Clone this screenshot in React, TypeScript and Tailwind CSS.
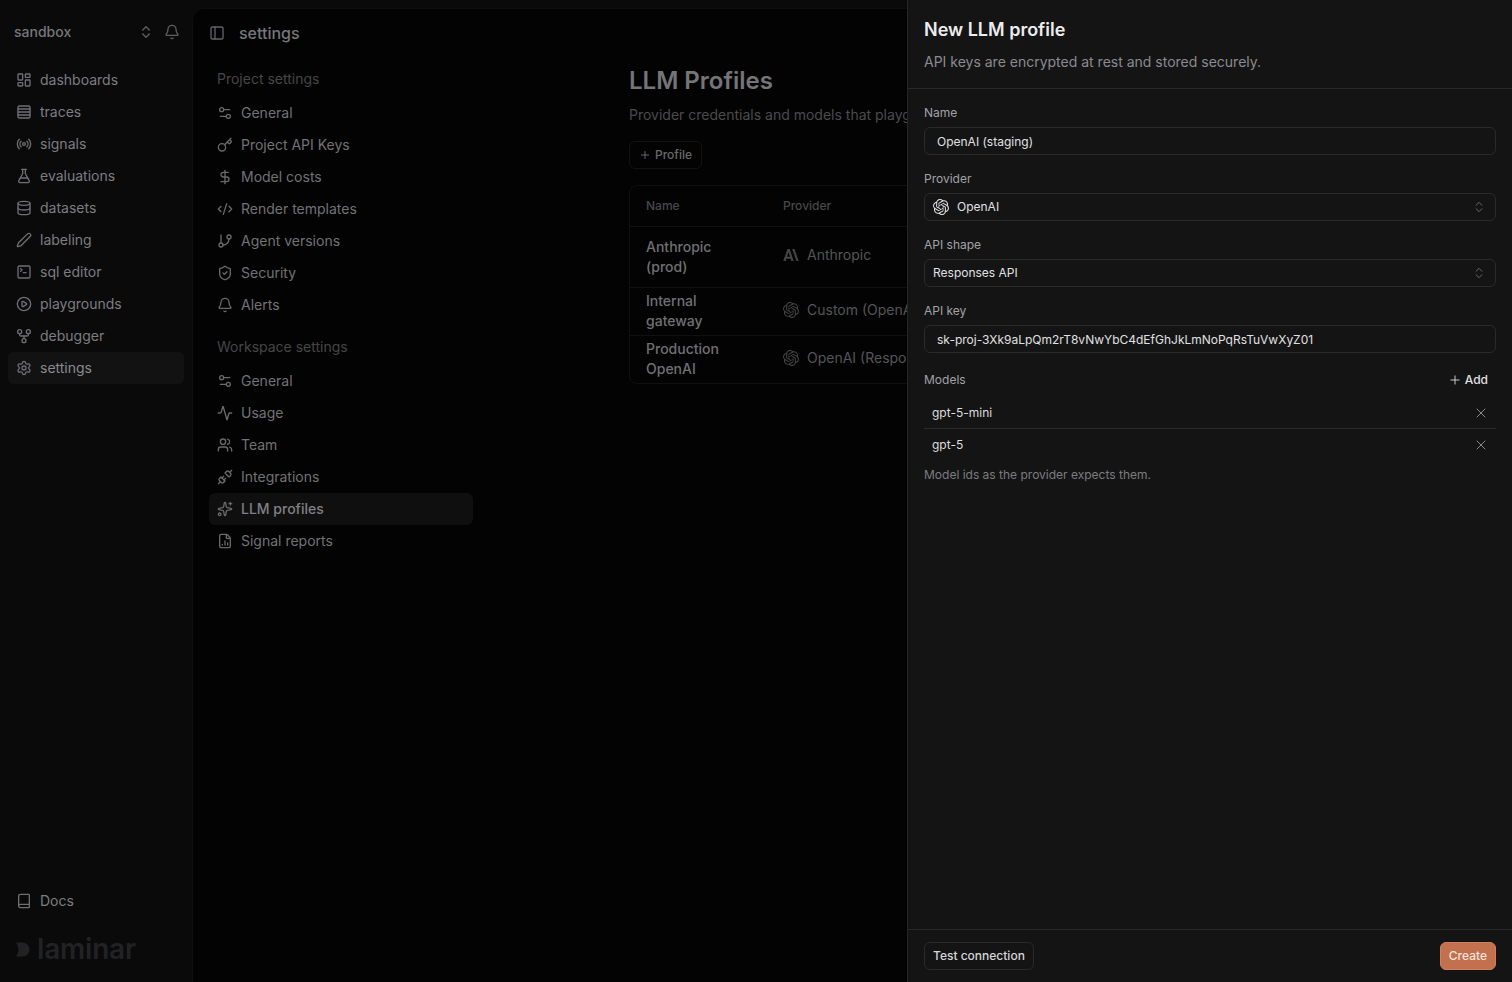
import React from "react";
import {
  LayoutDashboard, Rows4, Radio, FlaskConical, Database, Pen, SquareTerminal, CirclePlay, Settings, Book,
  ChevronsUpDown, Bell, PanelLeft, Settings2, Key, DollarSign, CodeXml, GitBranch, ShieldCheck, Activity,
  Users, Unplug, Sparkles, FileChartColumn, Plus, X,
} from "lucide-react";
import { SiOpenai } from "react-icons/si";

const Debugger = (p: { className?: string }) => (
  <svg viewBox="0 0 24 24" fill="none" stroke="currentColor" strokeWidth="2" strokeLinecap="round" strokeLinejoin="round" className={p.className}>
    <circle cx="12" cy="19" r="3" />
    <circle cx="5.5" cy="5.5" r="3" />
    <circle cx="18.5" cy="5.5" r="3" />
    <path d="M5.5 8.5v1.5a2 2 0 0 0 2 2h9a2 2 0 0 0 2-2V8.5" />
    <path d="M12 12v4" />
  </svg>
);

const AnthropicMark = (p: { className?: string }) => (
  <svg viewBox="0 0 16 12" fill="currentColor" className={p.className}>
    <path d="M4.4 0h2.3l4 12H8.3l-.7-2.3H3.4L2.7 12H.3L4.4 0Zm-.4 7.800h3L5.500 3 4 7.800Z" />
    <path d="M9.200 0h2.300l4.200 12h-2.300L9.200 0Z" />
  </svg>
);

const side: [any, string][] = [
  [LayoutDashboard, "dashboards"], [Rows4, "traces"], [Radio, "signals"], [FlaskConical, "evaluations"],
  [Database, "datasets"], [Pen, "labeling"], [SquareTerminal, "sql editor"], [CirclePlay, "playgrounds"],
  [Debugger, "debugger"], [Settings, "settings"],
];
const project: [any, string][] = [
  [Settings2, "General"], [Key, "Project API Keys"], [DollarSign, "Model costs"], [CodeXml, "Render templates"],
  [GitBranch, "Agent versions"], [ShieldCheck, "Security"], [Bell, "Alerts"],
];
const workspace: [any, string][] = [
  [Settings2, "General"], [Activity, "Usage"], [Users, "Team"], [Unplug, "Integrations"],
  [Sparkles, "LLM profiles"], [FileChartColumn, "Signal reports"],
];

function SideItem({ icon: I, label }: { icon: any; label: string }) {
  const on = label === "settings";
  return (
    <div className={`flex h-8 items-center gap-2 rounded-md px-2 text-sm ${on ? "bg-[#121213] text-[#8a8a8c]" : "text-[#7d7d80]"}`}>
      <I className="size-4 shrink-0 text-[#6f6f72]" />
      <span>{label}</span>
    </div>
  );
}

function NavItem({ icon: I, label }: { icon: any; label: string }) {
  const on = label === "LLM profiles";
  return (
    <div className={`flex h-8 items-center gap-2 rounded-md px-2 text-sm ${on ? "bg-[#0f0f10] font-medium text-[#808083]" : "text-[#727275]"}`}>
      <I className="size-4 shrink-0 text-[#69696c]" />
      <span>{label}</span>
    </div>
  );
}

function Field({ label, children }: { label: string; children: React.ReactNode }) {
  return (
    <div className="flex flex-col gap-1.5">
      <div className="text-xs font-normal leading-4 text-[#a2a2a6]">{label}</div>
      {children}
    </div>
  );
}

function Row({ name, second, logo, provider, h, nameClass }: { name: string; second: string; logo: React.ReactNode; provider: string; h: string; nameClass: string }) {
  return (
    <div className={`flex items-center border-t border-[#101011] ${h}`}>
      <div className={`w-[153px] shrink-0 pl-4 text-sm font-medium leading-5 text-[#707073] ${nameClass}`}>
        <div>{name}</div>
        <div>{second}</div>
      </div>
      <div className="flex items-center gap-2 whitespace-nowrap pb-1 text-sm text-[#555558]">
        {logo}
        <span>{provider}</span>
      </div>
    </div>
  );
}

export default function App() {
  return (
    <div className="relative flex h-[982px] w-[1512px] overflow-hidden bg-[#0a0a0b] font-['Inter',sans-serif]">
      <aside className="flex w-[192px] shrink-0 flex-col">
        <div className="flex h-[64px] items-center justify-between pl-3.5 pr-[12px]">
          <span className="text-sm font-medium text-[#77777a]">sandbox</span>
          <div className="flex items-center gap-2.5 text-[#5f5f62]">
            <ChevronsUpDown className="size-4" />
            <Bell className="size-4" />
          </div>
        </div>
        <nav className="flex flex-col px-2">
          {side.map(([i, l]) => <SideItem key={l} icon={i} label={l} />)}
        </nav>
        <div className="mt-auto flex flex-col px-2 pb-[17px]">
          <SideItem icon={Book} label="Docs" />
          <div className="mt-[16px] flex h-[32px] items-center gap-[6px] pl-[8px] text-[#222224]">
            <svg viewBox="0 0 15 15" className="size-[15px]" fill="currentColor"><path d="M0 .5h6.500a7 7 0 0 1 0 14H0c1.600-2.200 2.400-4.500 2.400-7S1.600 2.700 0 .5Z" /></svg>
            <span className="text-[28px] font-semibold leading-8 tracking-[-0.2px]">laminar</span>
          </div>
        </div>
      </aside>

      <main className="mt-[8px] flex min-w-0 flex-1 flex-col rounded-tl-xl border-l border-t border-[#0e0e0f] bg-[#030303]">
        <header className="flex h-[48px] items-center gap-[14px] pl-4">
          <PanelLeft className="size-4 text-[#636366]" />
          <span className="text-base font-medium text-[#77777a]">settings</span>
        </header>
        <div className="flex flex-1">
          <div className="w-[280px] shrink-0 pl-4 pr-0 pt-[6px]">
            <div className="flex h-8 items-center pl-2 text-sm text-[#464648]">Project settings</div>
            <div className="mt-[2px] flex flex-col">
              {project.map(([i, l]) => <NavItem key={l} icon={i} label={l} />)}
            </div>
            <div className="mt-[10px] flex h-8 items-center pl-2 text-sm text-[#464648]">Workspace settings</div>
            <div className="mt-[2px] flex flex-col">
              {workspace.map(([i, l]) => <NavItem key={l + "w"} icon={i} label={l} />)}
            </div>
          </div>
          <div className="ml-[156px] w-[800px] shrink-0 pt-[8px]">
            <h1 className="text-2xl font-semibold leading-8 text-[#757578]">LLM Profiles</h1>
            <p className="mt-[8px] whitespace-nowrap text-sm leading-5 text-[#4b4b4e]">Provider credentials and models that playgrounds and signals can use.</p>
            <button className="mt-4 flex h-7 items-center gap-1 rounded-md border border-[#121213] px-[9px] text-xs font-medium text-[#69696c]">
              <Plus className="size-3" />
              Profile
            </button>
            <div className="mt-4 rounded-lg border border-[#101011]">
              <div className="flex h-[40px] items-center text-xs font-medium text-[#48484b]">
                <div className="w-[153px] pl-4">Name</div>
                <div>Provider</div>
              </div>
              <Row h="h-[61px]" nameClass="" name="Anthropic" second="(prod)" provider="Anthropic" logo={<AnthropicMark className="h-3 w-4 text-[#444447]" />} />
              <Row h="h-[48px]" nameClass="pb-[1px]" name="Internal" second="gateway" provider="Custom (OpenAI compatible)" logo={<SiOpenai className="size-4 text-[#444447]" />} />
              <Row h="h-[48px]" nameClass="pb-[1px]" name="Production" second="OpenAI" provider="OpenAI (Responses API)" logo={<SiOpenai className="size-4 text-[#444447]" />} />
            </div>
          </div>
        </div>
      </main>

      <section className="absolute inset-y-0 right-0 flex w-[605px] flex-col border-l border-[#262628] bg-[#141415]">
        <div className="flex h-[89px] flex-col border-b border-[#29292b] px-4 pt-[17px]">
          <h2 className="text-lg font-semibold leading-[26px] text-[#ececee]">New LLM profile</h2>
          <p className="mt-[9px] text-sm leading-5 text-[#8b8b8f]">API keys are encrypted at rest and stored securely.</p>
        </div>
        <div className="flex flex-1 flex-col gap-4 px-4 pt-4">
          <Field label="Name">
            <div className="flex h-7 items-center rounded-md border border-[#2a2a2e] px-3 pt-[1px] text-xs text-[#e0e0e2]">OpenAI (staging)</div>
          </Field>
          <Field label="Provider">
            <div className="flex h-7 items-center justify-between rounded-md border border-[#2a2a2e] pl-2 pr-[9px] text-xs text-[#e0e0e2]">
              <span className="flex items-center gap-2"><SiOpenai className="size-4 text-[#e0e0e2]" />OpenAI</span>
              <ChevronsUpDown className="size-3.5 text-[#77777a]" strokeWidth={1.5} />
            </div>
          </Field>
          <Field label="API shape">
            <div className="flex h-7 items-center justify-between rounded-md border border-[#2a2a2e] pl-2 pr-[9px] text-xs text-[#e0e0e2]">
              <span>Responses API</span>
              <ChevronsUpDown className="size-3.5 text-[#77777a]" strokeWidth={1.5} />
            </div>
          </Field>
          <Field label="API key">
            <div className="flex h-7 items-center rounded-md border border-[#2a2a2e] px-3 pt-[1px] text-xs text-[#e0e0e2]">sk-proj-3Xk9aLpQm2rT8vNwYbC4dEfGhJkLmNoPqRsTuVwXyZ01</div>
          </Field>
          <div className="flex flex-col gap-1.5">
            <div className="flex h-[22px] items-center justify-between pr-2">
              <span className="text-xs text-[#a2a2a6]">Models</span>
              <span className="flex items-center gap-[3px] text-xs font-medium text-[#e0e0e2]"><Plus className="size-3.5" strokeWidth={1.5} />Add</span>
            </div>
            <div className="flex flex-col">
              <div className="flex h-8 items-center justify-between border-b border-[#2a2a2c] pl-2 pr-[7px] text-xs text-[#dcdcde]">
                <span>gpt-5-mini</span>
                <X className="size-4 text-[#8a8a8d]" strokeWidth={1.5} />
              </div>
              <div className="flex h-8 items-center justify-between pl-2 pr-[7px] text-xs text-[#dcdcde]">
                <span>gpt-5</span>
                <X className="size-4 text-[#8a8a8d]" strokeWidth={1.5} />
              </div>
            </div>
            <div className="text-xs leading-4 text-[#7c7c80]">Model ids as the provider expects them.</div>
          </div>
        </div>
        <div className="flex h-[53px] items-center justify-between border-t border-[#29292b] px-4">
          <button className="flex h-7 items-center rounded-md border border-[#2a2a2c] px-2 text-xs font-medium text-[#d6d6d8]">Test connection</button>
          <button className="flex h-7 items-center rounded-md border border-[#d0805c] bg-[#c2704d] px-2 text-xs font-medium text-[#f0e3dc]">Create</button>
        </div>
      </section>
    </div>
  );
}
